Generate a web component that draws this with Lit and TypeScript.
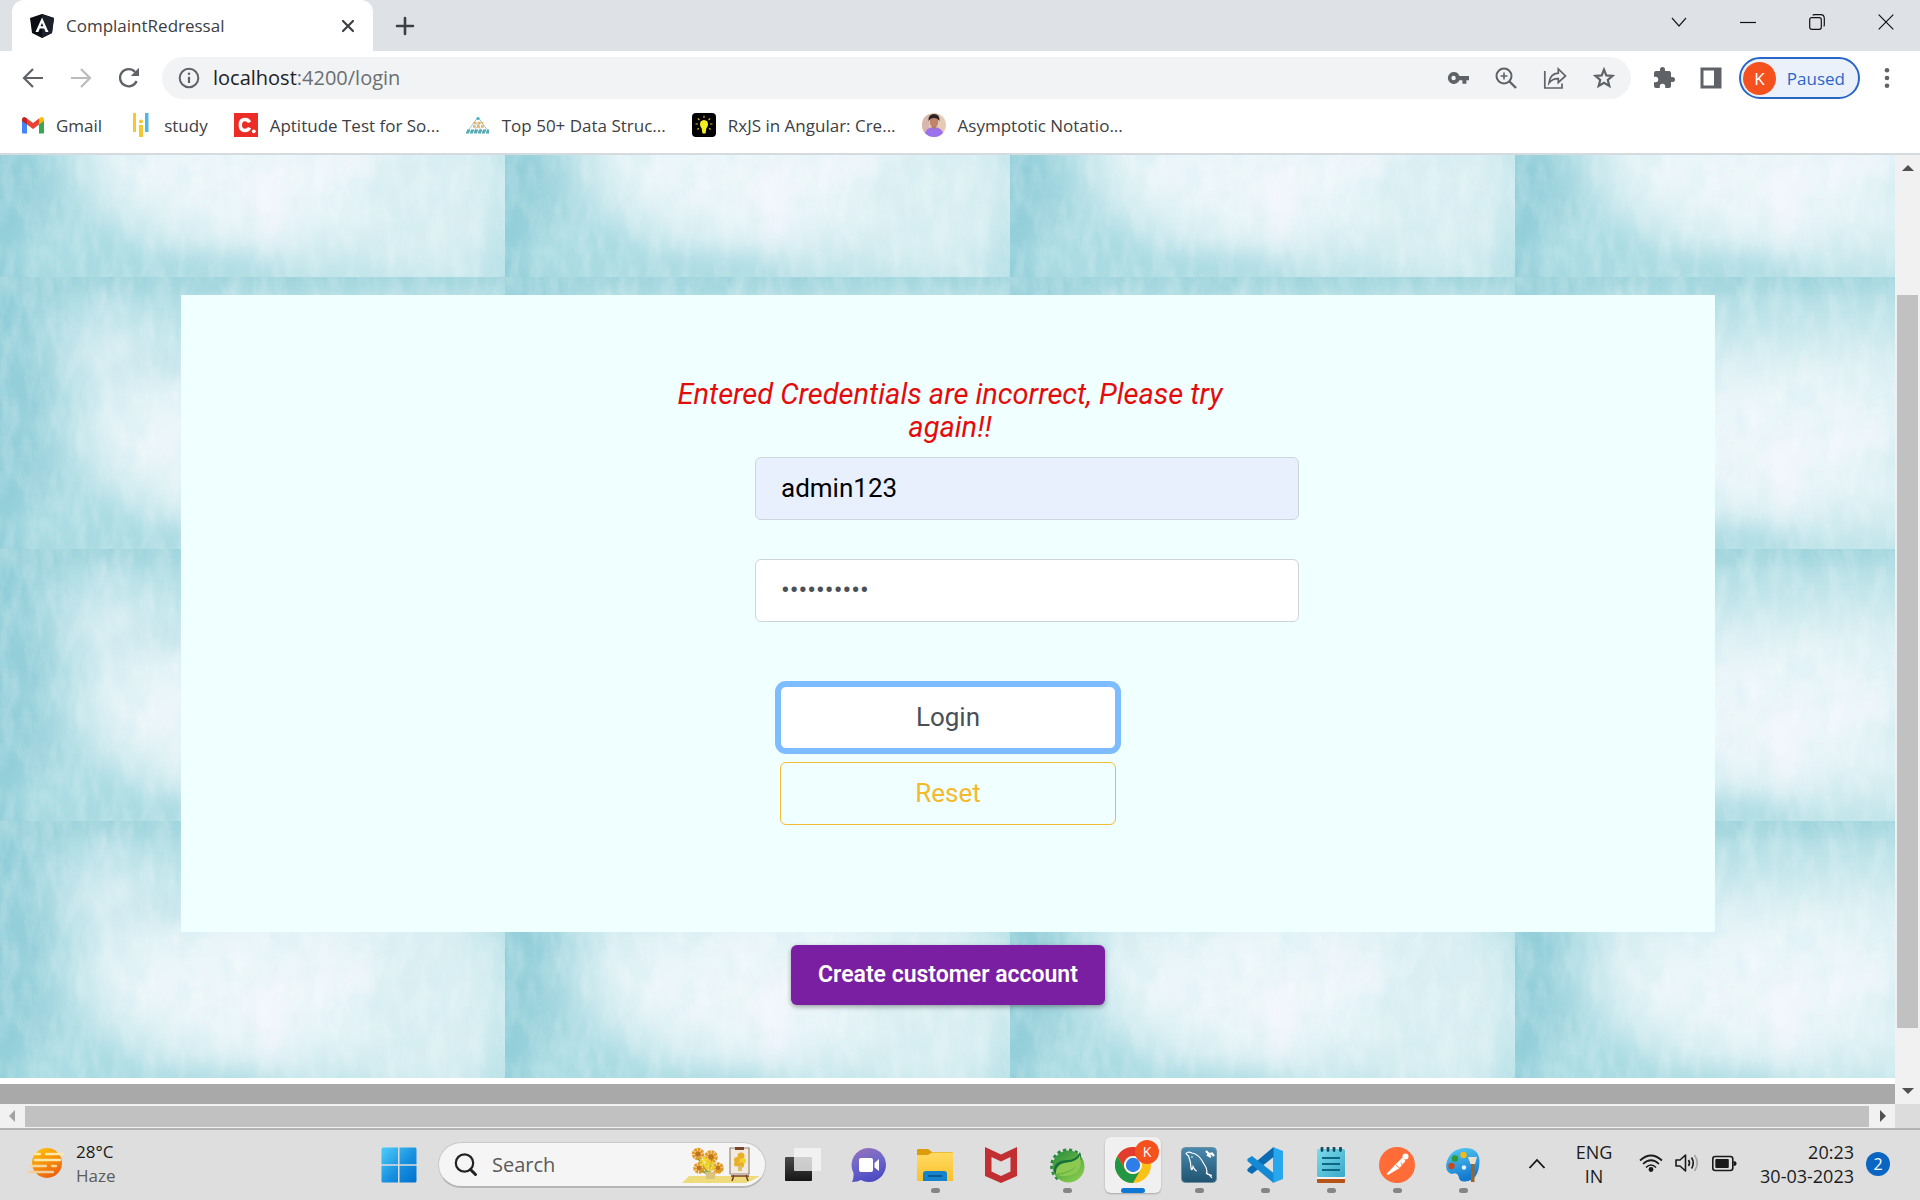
import { LitElement, html, css } from "lit";
import { customElement } from "lit/decorators.js";

const icons = {
  angular: html`<svg width="24" height="24" viewBox="0 0 24 24" aria-hidden="true">
    <path d="M12 0 24 4 22 19 12 24 2 19 0 4Z" fill="#0b0d14"/><path d="M12 0 24 4 22 19 12 24Z" fill="#1c202b"/>
    <path d="M12 3.5 5.5 18H8.4L9.8 14.6H14.2L15.6 18H18.5ZM12 9 13.4 12.3H10.6Z" fill="#fff"/></svg>`,
  close: html`<svg width="14" height="14" viewBox="0 0 14 14" aria-hidden="true"><path d="M2 2 12 12M12 2 2 12" stroke="#3c4043" stroke-width="2.2" stroke-linecap="round"/></svg>`,
  plus: html`<svg width="20" height="20" viewBox="0 0 20 20" aria-hidden="true"><path d="M10 2V18M2 10H18" stroke="#3c4043" stroke-width="2.6" stroke-linecap="round"/></svg>`,
  tabSearch: html`<svg width="16" height="16" viewBox="0 0 16 16" fill="none" aria-hidden="true"><path d="M1 4 8 12 15 4" stroke="#222" stroke-width="1.2"/></svg>`,
  minimize: html`<svg width="16" height="16" viewBox="0 0 16 16" aria-hidden="true"><path d="M0 8.5H16" stroke="#111" stroke-width="1.2"/></svg>`,
  restore: html`<svg width="16" height="16" viewBox="0 0 16 16" fill="none" stroke="#111" stroke-width="1.2" aria-hidden="true"><rect x=".7" y="3.7" width="11.6" height="11.6" rx="2"/><path d="M3.7 1.2Q4.3.7 5.5.7H11.5Q15.3.7 15.3 4.5V10.5Q15.3 11.7 14.8 12.5"/></svg>`,
  winClose: html`<svg width="16" height="16" viewBox="0 0 16 16" aria-hidden="true"><path d="M.7.7 15.3 15.3M15.3.7.7 15.3" stroke="#111" stroke-width="1.2"/></svg>`,
  back: html`<svg width="22" height="22" viewBox="0 0 22 22" fill="none" stroke="#5f6368" stroke-width="2.2" aria-hidden="true"><path d="M21 11H2.5M11 2 2 11 11 20"/></svg>`,
  forward: html`<svg width="22" height="22" viewBox="0 0 22 22" fill="none" stroke="#babcbe" stroke-width="2.2" aria-hidden="true"><path d="M1 11H19.5M11 2 20 11 11 20"/></svg>`,
  reload: html`<svg width="22" height="22" viewBox="0 0 22 22" aria-hidden="true"><path d="M18.6 14A8.6 8.6 0 1 1 17 4.9" fill="none" stroke="#5f6368" stroke-width="2.3"/><path d="M21 .8V9H12.8Z" fill="#5f6368"/></svg>`,
  info: html`<svg width="22" height="22" viewBox="0 0 22 22" aria-hidden="true"><circle cx="11" cy="11" r="9.3" fill="none" stroke="#5f6368" stroke-width="2"/><path d="M11 9.8V16" stroke="#5f6368" stroke-width="2.2"/><circle cx="11" cy="6.7" r="1.3" fill="#5f6368"/></svg>`,
  key: html`<svg width="22" height="22" viewBox="0 0 22 22" aria-hidden="true"><path d="M7 5A6 6 0 1 0 12.4 13.2H15.4V16.8H19.4V13.2H22V9H12.4A6 6 0 0 0 7 5ZM6.6 8.8A2.2 2.2 0 1 1 6.6 13.2 2.2 2.2 0 0 1 6.6 8.8Z" fill="#5f6368" fill-rule="evenodd"/></svg>`,
  zoom: html`<svg width="22" height="22" viewBox="0 0 22 22" fill="none" stroke="#5f6368" aria-hidden="true"><circle cx="9" cy="9" r="7.5" stroke-width="2"/><path d="M14.500 14.500 21 21" stroke-width="2.4"/><path d="M9 5.6V12.4M5.6 9H12.4" stroke-width="1.6"/></svg>`,
  share: html`<svg width="24" height="24" viewBox="0 0 24 24" fill="none" stroke="#5f6368" stroke-width="1.7" stroke-linejoin="miter" aria-hidden="true"><path d="M1.8 5V22H19V17.5"/><path d="M6 17Q7 7.7 15.3 7.2V3L22.5 10 15.3 16.5V12.6Q9.5 12.3 6 17Z"/></svg>`,
  star: html`<svg width="22" height="22" viewBox="0 0 22 22" fill="none" stroke="#5f6368" stroke-width="2.2" aria-hidden="true"><path d="M11 2.6 13.3 8.400 19.500 8.900 14.800 12.900 16.300 19 11 15.700 5.700 19 7.200 12.900 2.500 8.900 8.700 8.400Z"/></svg>`,
  puzzle: html`<svg width="24" height="24" viewBox="0 0 24 24" aria-hidden="true"><path d="M20.500 11H19V7a2 2 0 0 0-2-2h-4V3.500a2.500 2.500 0 0 0-5 0V5H4a2 2 0 0 0-2 2v3.800h1.500a2.700 2.700 0 0 1 0 5.400H2V20a2 2 0 0 0 2 2h3.800v-1.500a2.700 2.700 0 0 1 5.400 0V22H17a2 2 0 0 0 2-2v-4h1.500a2.500 2.500 0 0 0 0-5Z" fill="#5f6368"/></svg>`,
  panel: html`<svg width="22" height="22" viewBox="0 0 22 22" aria-hidden="true"><path d="M.5.500H21.500V21.500H.5Z" fill="#5f6368"/><path d="M3.500 3.500H14V18.500H3.500Z" fill="#fff"/></svg>`,
  dots: html`<svg width="6" height="22" viewBox="0 0 6 22" fill="#5f6368" aria-hidden="true"><circle cx="3" cy="3.200" r="2.300"/><circle cx="3" cy="11" r="2.300"/><circle cx="3" cy="18.800" r="2.300"/></svg>`,
  gmail: html`<svg width="24" height="24" viewBox="0 0 24 24" aria-hidden="true"><path d="M2 7V19.500Q2 20.500 3 20.500H7V10Z" fill="#4285f4"/><path d="M24 7V19.500Q24 20.500 23 20.500H19V10Z" fill="#34a853"/><path d="M7 5.500 13 10 19 5.500V11.500L13 16 7 11.500Z" fill="#ea4335"/><path d="M2 7Q2 4 4.500 4 5.500 4 7 5.500V11.500L2 8Z" fill="#c5221f"/><path d="M24 7Q24 4 21.500 4 20.500 4 19 5.500V11.500L24 8Z" fill="#fbbc04"/></svg>`,
  study: html`<svg width="24" height="24" viewBox="-4 0 24 24" aria-hidden="true"><path d="M1 0H4V19H1ZM7 12H11V24H7Z" fill="#f8c630"/><circle cx="9" cy="8.500" r="2" fill="#f8c630"/><path d="M13 0H16.500V19H13Z" fill="#55b4e8"/></svg>`,
  coding: html`<svg width="24" height="24" viewBox="0 0 24 24" aria-hidden="true"><path d="M0 0H24V24H0Z" fill="#ec2d27"/><path d="M15.500 9.300Q14.400 6.500 10.900 6.500 6.300 6.500 6.300 12T10.900 17.500Q14.400 17.500 15.500 14.700" fill="none" stroke="#fff" stroke-width="3.400"/><circle cx="19.800" cy="18.300" r="1.900" fill="#fff"/></svg>`,
  pyramid: html`<svg width="24" height="24" viewBox="0 0 24 24" fill="none" aria-hidden="true"><path d="M12 4 2 18H22ZM9 9 16 18M15 9 8 18" stroke="#9cc7cd" stroke-width="1"/><path d="M7.500 10H17M7 13.500H18" stroke="#e9b266" stroke-width="2.600" stroke-dasharray="2.800 1.200"/><path d="M1 17.500H23M0 19.500H24" stroke="#55a9b4" stroke-width="2" stroke-dasharray="3 1"/><circle cx="12" cy="5.500" r="1.600" fill="#4fb3bf"/></svg>`,
  bulb: html`<svg width="24" height="24" viewBox="0 0 24 24" aria-hidden="true"><rect width="24" height="24" rx="4"/><path d="M12 7A4.300 4.300 0 0 0 8 11.500Q8 13.400 9.700 15.500L10.300 20Q12 21.500 13.700 20L14.300 15.500Q16 13.400 16 11.500A4.300 4.300 0 0 0 12 7Z" fill="#f3ee20"/><path d="M12 2.800V5M5.800 5.500 7.500 7M18.200 5.500 16.500 7M3.500 11H6M18 11H20.500M5.300 16.500 7 15.300M18.700 16.500 17 15.300" stroke="#e0b52a" stroke-width="1.100"/></svg>`,
  avatar: html`<svg width="24" height="24" viewBox="0 0 24 24" aria-hidden="true"><defs><clipPath id="av"><circle cx="12" cy="12" r="12"/></clipPath></defs><g clip-path="url(#av)"><path d="M0 0H24V24H0Z" fill="#e5cbb6"/><path d="M0 0H7V24H0Z" fill="#d7b7ae"/><path d="M2 24Q3 14 12 14T22 24Z" fill="#9c72ec"/><ellipse cx="12" cy="9" rx="4.200" ry="5.500" fill="#c1846b"/><path d="M6.500 8Q6 1 12 1T17.500 8Q15 4.500 12 5 9 4.500 6.500 8Z" fill="#2b2324"/><path d="M9.500 13.500 12 17 14.500 13.500Z" fill="#b67663"/></g></svg>`,
  haze: html`<svg width="38" height="34" viewBox="0 0 38 34" aria-hidden="true"><defs><linearGradient id="hz" x1="0" y1="0" x2=".5" y2="1"><stop stop-color="#ffc908"/><stop offset="1" stop-color="#ec6410"/></linearGradient></defs><circle cx="19" cy="16" r="15" fill="url(#hz)"/><g fill="none" stroke="#ffe9a8" stroke-width="2.300" stroke-linecap="round"><path d="M7 7H12M18 7H35" /><path d="M7 13H32"/><path d="M2 19H18M24 19H28" stroke="#f6d69a"/><path d="M1 25H25" stroke="#efcf9a"/></g></svg>`,
  start: html`<svg width="36" height="36" viewBox="0 0 36 36" aria-hidden="true"><defs><linearGradient id="wn" x1="0" y1="0" x2="1" y2="1"><stop stop-color="#4fcdfa"/><stop offset=".55" stop-color="#1790df"/><stop offset="1" stop-color="#0270cf"/></linearGradient></defs><path d="M2 .500H17V17.300H.5V2Q.5.500 2 .500ZM18.500.500H34Q35.500.500 35.500 2V17.300H18.500ZM.5 18.700H17V35.500H2Q.5 35.500.5 34ZM18.500 18.700H35.500V34Q35.500 35.500 34 35.500H18.500Z" fill="url(#wn)"/></svg>`,
  search: html`<svg width="24" height="24" viewBox="0 0 24 24" fill="none" stroke="#222" aria-hidden="true"><circle cx="10.500" cy="10" r="8.700" stroke-width="2.200"/><path d="M16.500 16.500 21.500 21.500" stroke-width="3" stroke-linecap="round"/></svg>`,
  sunflowers: html`<svg width="78" height="38" viewBox="0 0 78 38" aria-hidden="true"><path d="M0 37 7 30H78Q72 34 64 37Z" fill="#eedb7c"/>
    <path d="M16 12 26 27M30 12 27 28M40 24 28 28M18 24 26 28" stroke="#8e9c35" stroke-width="2"/>
    <g fill="none" stroke="#e59a26" stroke-width="4.500" stroke-dasharray="2.400 .6"><circle cx="16" cy="8" r="4"/><circle cx="29" cy="11" r="4.500"/><circle cx="17" cy="22" r="3.500"/><circle cx="36" cy="22" r="3.500"/><circle cx="23" cy="16" r="3" stroke="#f3d328"/><circle cx="28" cy="20" r="3" stroke="#efcf2b"/></g>
    <g fill="#bd741b"><circle cx="16" cy="8" r="2.600"/><circle cx="29" cy="11" r="2.800"/><circle cx="17" cy="22" r="2.300"/><circle cx="36" cy="22" r="2.300"/></g>
    <path d="M23 26H34L32.500 33H24.500Z" fill="#dcc27f"/>
    <path d="M52 29 50 35M64 29 66 35M49 30H67" stroke="#7b4325" stroke-width="1.600"/><path d="M48 2H67V28H48Z" fill="#f1ebdf" stroke="#9a8576" stroke-width="1.200"/><path d="M53 1H62V4H53ZM57 0V2" fill="#7b4325"/><g fill="#e9ae27"><circle cx="59" cy="10" r="3.500"/><circle cx="55" cy="14" r="3"/><circle cx="61" cy="15" r="3" fill="#f3d328"/><circle cx="54.500" cy="18" r="2.500"/><circle cx="59" cy="19" r="3"/></g><path d="M56 20H60V25H56Z" fill="#d8bf72"/></svg>`,
  taskView: html`<svg width="36" height="36" viewBox="0 0 36 36" aria-hidden="true"><defs><linearGradient id="tv" x1="0" y1="0" x2="0" y2="1"><stop stop-color="#4a4a4a"/><stop offset="1" stop-color="#161616"/></linearGradient></defs><rect y="10" width="27" height="24" rx="1" fill="url(#tv)"/><rect x="9" y="1" width="27" height="23" rx="1" fill="#f6f6f6" opacity=".78"/></svg>`,
  chat: html`<svg width="36" height="36" viewBox="0 0 36 36" aria-hidden="true"><defs><linearGradient id="ch" x1="0" y1="0" x2=".3" y2="1"><stop stop-color="#9a71b8"/><stop offset=".5" stop-color="#6f68c9"/><stop offset="1" stop-color="#4f4cc4"/></linearGradient></defs><path d="M17.500 1A17 17 0 1 1 10 33Q6.500 35 1 35 3 31 2.500 26A17 17 0 0 1 17.500 1Z" fill="url(#ch)"/><rect x="8" y="11" width="14" height="14" rx="2" fill="#fff"/><path d="M23.500 16 28 12V24L23.500 20.500Z" fill="#fff"/></svg>`,
  folder: html`<svg width="36" height="36" viewBox="0 0 36 36" aria-hidden="true"><defs><linearGradient id="fo" x1="0" y1="0" x2="0" y2="1"><stop stop-color="#ffdb62"/><stop offset="1" stop-color="#fbc02d"/></linearGradient></defs><path d="M0 3Q0 2 1 2H11Q12 2 13 3.500L15 5H35Q36 5 36 6V12H0Z" fill="#dc9d0c"/><path d="M0 8H11L15 5.500H36V34H0Z" fill="url(#fo)"/><path d="M6 34V27Q6 24 9 24H27Q30 24 30 27V34Z" fill="#1583cb"/><path d="M11 29H25" stroke="#0a4a83" stroke-width="1.500"/></svg>`,
  mcafee: html`<svg width="36" height="36" viewBox="0 0 36 36" aria-hidden="true"><path d="M2 0 18 7.500 34 0V29L18 36 2 29ZM8.500 10V24.500L18 29 27.500 24.500V10L18 14.500Z" fill="#c12f33" fill-rule="evenodd"/></svg>`,
  spring: html`<svg width="36" height="36" viewBox="0 0 36 36" aria-hidden="true"><defs><linearGradient id="sp" x1="0" y1="0" x2=".7" y2="1"><stop stop-color="#278b3c"/><stop offset="1" stop-color="#86cb4b"/></linearGradient></defs><path d="M28 6.500A15.500 15.500 0 1 0 10 32" fill="none" stroke="#278b3c" stroke-width="4.500" stroke-dasharray="3 2.600"/><circle cx="19.500" cy="19.500" r="16" fill="url(#sp)"/><path d="M31 5Q34 12 30 17 25 21 15 22 8 23 6 27 3 20 8 16 12 13 19 13 27 13 31 5Z" fill="#17703a"/><path d="M31 8Q34 20 27 26 19 31 8 28 21 27 27.500 19 20 25.500 7 27 6 17 18 15.500 28 15 31 8Z" fill="#8bc951"/></svg>`,
  chrome: html`<svg width="36" height="36" viewBox="0 0 36 36" aria-hidden="true"><circle cx="18" cy="18" r="18" fill="#fbc116"/><path d="M2.400 9A18 18 0 0 1 33.600 9H18A9 9 0 0 0 10.200 22.500Z" fill="#e33b2e"/><path d="M2.400 9 10.200 22.500A9 9 0 0 0 25.800 22.500L18 36A18 18 0 0 1 2.400 9Z" fill="#239646"/><circle cx="18" cy="18" r="9" fill="#fff"/><circle cx="18" cy="18" r="7.200" fill="#2f7de9"/></svg>`,
  mysql: html`<svg width="36" height="36" viewBox="0 0 36 36" aria-hidden="true"><defs><linearGradient id="my" x1="0" y1="0" x2="0" y2="1"><stop stop-color="#4a89ad"/><stop offset="1" stop-color="#205372"/></linearGradient></defs><rect x=".5" y=".5" width="35" height="35" rx="4" fill="url(#my)" stroke="#6d8fa2"/><g fill="none" stroke="#fff" stroke-width="1.200"><path d="M31 31Q28 27 25.500 26.500 27 23 23 17 18 7 11 6 7 4 5 6.500 6 8 7.500 9 10 15 10 21 11 25 12 19.500 14 24 16 24"/><path d="M25.500 26.500 31 28.500"/></g><circle cx="11" cy="10" r=".8" fill="#fff"/><path d="M25 4 28 7 31 6.500 33 9M26 7.500 30 10" stroke="#fff" stroke-width="2.200" fill="none"/></svg>`,
  vscode: html`<svg width="36" height="36" viewBox="0 0 36 36" aria-hidden="true"><path d="M26 0 36 4V32L26 36Z" fill="#27a7ee"/><path d="M26.500 0V10L5 27 1 24.500Q-.5 23 1 21.500Z" fill="#0b6bb2"/><path d="M1 14.500Q-.5 13 1 11.500L5 9 26.500 26V36Z" fill="#1489d4"/></svg>`,
  notepad: html`<svg width="36" height="36" viewBox="0 0 36 36" aria-hidden="true"><defs><linearGradient id="np" x1="0" y1="0" x2="1" y2="1"><stop stop-color="#7cdcec"/><stop offset="1" stop-color="#39a8c7"/></linearGradient></defs><path d="M4 30H32V32H4Z" fill="#f3f3f3"/><path d="M4 32H32V35Q32 36 31 36H5Q4 36 4 35Z" fill="#b75417"/><rect x="4" y="2" width="28" height="28" rx="1.500" fill="url(#np)"/><path d="M9 11H27M9 17H27M9 23H27" stroke="#0d6683" stroke-width="2"/><path d="M9 1V3.500M15 1V3.500M21 1V3.500M27.500 1V3.500" stroke="#184c63" stroke-width="2.800" stroke-linecap="round"/></svg>`,
  postman: html`<svg width="36" height="36" viewBox="0 0 36 36" aria-hidden="true"><circle cx="18" cy="18" r="18" fill="#ff6c37"/><circle cx="26.500" cy="9.500" r="3" fill="#fff"/><path d="M23.500 10.500 26.500 14 20 21.500 9 28 7.500 27 16 18Z" fill="#fff"/><path d="M17 18 21 21.500M22 15.500 23.500 19" stroke="#ff6c37" stroke-width=".9"/></svg>`,
  paint: html`<svg width="36" height="36" viewBox="0 0 36 36" aria-hidden="true"><defs><linearGradient id="pa" x1="0" y1="0" x2=".3" y2="1"><stop stop-color="#55cdf5"/><stop offset="1" stop-color="#1478cf"/></linearGradient></defs><path d="M20 1Q34 1 34.500 14 34 34 20 34.500 14 35 13.500 29 12 25 7 27 1 26 1 18 4 2 20 1Z" fill="url(#pa)"/><circle cx="10" cy="11.500" r="3.200" fill="#329a2c"/><circle cx="18.500" cy="8" r="3.200" fill="#f4b912"/><circle cx="6.500" cy="19" r="3.200" fill="#c9481d"/><circle cx="19" cy="20.500" r="2.200" fill="#e2f4fb"/><path d="M26 17H29.500V35H26Z" fill="#9a642a"/><path d="M23 10H32L30 17H25.500Z" fill="#eee0c8"/></svg>`,
  chevronUp: html`<svg width="18" height="18" viewBox="0 0 18 18" fill="none" aria-hidden="true"><path d="M1.500 13 9 5 16.500 13" stroke="#111" stroke-width="1.800"/></svg>`,
  wifi: html`<svg width="24" height="24" viewBox="0 0 24 24" fill="none" stroke="#1a1a1a" stroke-width="1.700" aria-hidden="true"><path d="M1 8.500Q12-1.500 23 8.500M4 12Q12 4.500 20 12M7 15.500Q12 10.500 17 15.500"/><circle cx="12" cy="17.500" r="1.600" fill="#1a1a1a"/></svg>`,
  speaker: html`<svg width="24" height="24" viewBox="0 0 24 24" fill="none" stroke="#1a1a1a" stroke-width="1.600" stroke-linejoin="round" aria-hidden="true"><path d="M1 8H5L10.500 3V19L5 14H1Z"/><path d="M13.500 8Q15.500 11 13.500 14M16.500 5.500Q20 11 16.500 16.500"/><path d="M19.500 3Q25 11 19.500 19" stroke="#a4a4a4"/></svg>`,
  battery: html`<svg width="26" height="18" viewBox="0 0 26 18" aria-hidden="true"><rect x="1.800" y="1.500" width="20" height="14" rx="2.500" fill="none" stroke="#1a1a1a" stroke-width="1.600"/><rect x="4.300" y="4" width="13.500" height="9" rx="1" fill="#1a1a1a"/><path d="M22.500 6Q25.500 6 25.500 8.500T22.500 11Z" fill="#1a1a1a"/></svg>`,
};

const bookmarks = [
  { icon: icons.gmail, label: "Gmail" },
  { icon: icons.study, label: "study" },
  { icon: icons.coding, label: "Aptitude Test for So..." },
  { icon: icons.pyramid, label: "Top 50+ Data Struc..." },
  { icon: icons.bulb, label: "RxJS in Angular: Cre..." },
  { icon: icons.avatar, label: "Asymptotic Notatio..." },
];

const apps = [
  { name: "Task view", icon: icons.taskView, state: "" },
  { name: "Chat", icon: icons.chat, state: "" },
  { name: "File Explorer", icon: icons.folder, state: "open" },
  { name: "McAfee", icon: icons.mcafee, state: "" },
  { name: "Spring Tools", icon: icons.spring, state: "open" },
  { name: "Google Chrome", icon: icons.chrome, state: "active" },
  { name: "MySQL Workbench", icon: icons.mysql, state: "open" },
  { name: "Visual Studio Code", icon: icons.vscode, state: "open" },
  { name: "Notepad", icon: icons.notepad, state: "open" },
  { name: "Postman", icon: icons.postman, state: "open" },
  { name: "Paint", icon: icons.paint, state: "open" },
];

const reset = css`
  * { box-sizing: border-box; }
  svg { display: block; flex: none; }
  button { font: inherit; color: inherit; background: none; border: 0; margin: 0; padding: 0; }
  a { color: inherit; text-decoration: none; }
`;

@customElement("browser-chrome")
export class BrowserChrome extends LitElement {
  static styles = [reset, css`
    :host { display: block; background: #fff; color: #3c4043; font-family: "Open Sans", "Noto Sans", sans-serif; font-size: 17px; }
    .tabs { display: flex; align-items: center; height: 51px; padding-left: 12px; background: #dee1e6; }
    .tab { display: flex; align-items: center; gap: 12px; width: 361px; height: 51px; padding: 0 18px; background: #fff; border-radius: 12px 12px 0 0; }
    .title { flex: 1; }
    .new { margin-left: 22px; }
    .window { display: flex; gap: 53px; margin: 0 26px 8px auto; }
    .toolbar { display: flex; align-items: center; height: 54px; padding: 0 30px 0 22px; }
    .nav { display: flex; gap: 26px; margin-right: 22px; }
    .omnibox { display: flex; flex: 1; align-items: center; gap: 26px; height: 42px; padding: 0 16px; border-radius: 21px; background: #f1f3f4; }
    .address { flex: 1; min-width: 0; margin-left: -13px; padding: 0; border: 0; background: none; font-size: 20px; line-height: 28px; color: #6b6f73; }
    .host { color: #202124; }
    .actions { display: flex; align-items: center; gap: 24px; margin-left: 21px; }
    .profile { display: flex; align-items: center; justify-content: space-between; width: 121px; height: 42px; margin-left: -7px; padding: 0 13px 0 2px; border: 2px solid #2a66c8; border-radius: 21px; background: #eaf1fb; color: #2a66c8; }
    .initial { display: grid; place-items: center; width: 33px; height: 33px; border-radius: 50%; background: #f4511e; color: #fff; }
    .bookmarks { display: flex; align-items: center; gap: 26px; height: 48px; padding: 0 20px 8px; }
    .bookmark { display: flex; align-items: center; gap: 12px; }
    .rule { height: 2px; background: #d5dade; }
  `];
  render() {
    return html`
      <div class="tabs">
        <div class="tab">${icons.angular}<span class="title">ComplaintRedressal</span><button aria-label="Close tab">${icons.close}</button></div>
        <button class="new" aria-label="New tab">${icons.plus}</button>
        <div class="window">
          <button aria-label="Search tabs">${icons.tabSearch}</button><button aria-label="Minimize">${icons.minimize}</button>
          <button aria-label="Restore">${icons.restore}</button><button aria-label="Close">${icons.winClose}</button>
        </div>
      </div>
      <div class="toolbar">
        <div class="nav"><button aria-label="Back">${icons.back}</button><button aria-label="Forward">${icons.forward}</button><button aria-label="Reload">${icons.reload}</button></div>
        <div class="omnibox">
          <button aria-label="Site information">${icons.info}</button>
          <div class="address" role="textbox" aria-label="Address" contenteditable="plaintext-only"><span class="host">localhost</span>:4200/login</div>
          <button aria-label="Passwords">${icons.key}</button><button aria-label="Zoom">${icons.zoom}</button>
          <button aria-label="Share">${icons.share}</button><button aria-label="Bookmark">${icons.star}</button>
        </div>
        <div class="actions">
          <button aria-label="Extensions">${icons.puzzle}</button><button aria-label="Side panel">${icons.panel}</button>
          <button class="profile"><span class="initial">K</span>Paused</button>
          <button aria-label="Menu">${icons.dots}</button>
        </div>
      </div>
      <nav class="bookmarks">${bookmarks.map((b) => html`<a class="bookmark" href="#">${b.icon}<span>${b.label}</span></a>`)}</nav>
      <div class="rule"></div>
    `;
  }
}

@customElement("login-page")
export class LoginPage extends LitElement {
  static styles = [reset, css`
    :host { position: relative; display: flex; flex-direction: column; min-width: 0; overflow: hidden; font-family: Roboto, sans-serif; background: #a9a9a9; }
    .page { position: relative; flex: 1; padding: 140px 180px 72px 181px; border-bottom: 6px solid #fff; text-align: center; }
    .texture { position: absolute; inset: 0; width: 100%; height: 100%; }
    .card { position: relative; display: flex; flex-direction: column; align-items: center; padding: 83px 0 107px; background: #f0ffff; }
    .error { width: 560px; margin: 0 0 13px 4px; font-size: 29px; font-style: italic; line-height: 33px; color: #e60b0b; }
    .field { width: 544px; height: 63px; margin: 0 0 39px 158px; padding: 0 25px 1px; border: 1px solid #ced4da; border-radius: 6px; background: #fff; font: 26px/40px Roboto, sans-serif; color: #495057; outline: 0; }
    .filled { background: #e8f0fe; color: #000; }
    .btn { width: 336px; height: 63px; padding-bottom: 2px; border: 1px solid #f2bb33; border-radius: 6px; font-size: 26px; color: #f5b92c; }
    .login { margin: 25px 0 13px; border-color: #7dbcff; background: #fff; color: #495057; box-shadow: 0 0 0 5px #7dbcff; }
    .create { position: relative; height: 60px; margin-top: 13px; padding: 0 27px 2px; border-radius: 6px; background: #7b1fa2; color: #fff; font-size: 23px; font-weight: 600; box-shadow: 0 2px 5px rgba(0, 0, 0, .35); }
    .footer { height: 20px; }
  `];
  render() {
    return html`
      <main class="page">
        <svg class="texture" aria-hidden="true">
          <defs>
            <linearGradient id="edge"><stop stop-color="#8fcdd8"/><stop offset=".08" stop-color="#9dd3dd"/><stop offset=".2" stop-color="#b0dee4"/><stop offset=".6" stop-color="#b8e1e6"/><stop offset=".9" stop-color="#c2e5ea"/><stop offset="1" stop-color="#b2dfe5"/></linearGradient>
            <filter id="soft" x="-50%" y="-50%" width="200%" height="200%"><feGaussianBlur stdDeviation="24"/></filter>
            <filter id="mist" x="-50%" y="-50%" width="200%" height="200%"><feGaussianBlur stdDeviation="11"/></filter>
            <filter id="light" x="0" y="0" width="100%" height="100%"><feTurbulence type="fractalNoise" baseFrequency=".07 .025" numOctaves="5" seed="7"/><feColorMatrix values="0 0 0 0 1  0 0 0 0 1  0 0 0 0 1  2 0 0 0 -.8"/></filter>
            <filter id="dark" x="0" y="0" width="100%" height="100%"><feTurbulence type="fractalNoise" baseFrequency=".035 .03" numOctaves="5" seed="19"/><feColorMatrix values="0 0 0 0 .54  0 0 0 0 .8  0 0 0 0 .84  2 0 0 0 -.85"/></filter>
            <pattern id="tile" width="505" height="272" y="122" patternUnits="userSpaceOnUse">
              <rect width="505" height="272" fill="url(#edge)"/>
              <g filter="url(#soft)">
                <ellipse cx="290" cy="155" rx="215" ry="98" fill="#dff1f5"/>
                <ellipse cx="260" cy="165" rx="145" ry="60" fill="#ecf6fa"/>
                <ellipse cx="430" cy="190" rx="75" ry="85" fill="#daeff3"/>
                <ellipse cx="110" cy="70" rx="55" ry="36" fill="#cbe8ee"/>
              </g>
              <g filter="url(#mist)">
                <ellipse cx="110" cy="75" rx="30" ry="20" fill="#d5ecf1"/>
                <ellipse cx="165" cy="90" rx="26" ry="7" fill="#b2dce3"/>
                <rect x="-20" y="-14" width="545" height="28" fill="#9bd2db"/>
                <ellipse cx="16" cy="130" rx="22" ry="60" fill="#93ced9"/>
                <ellipse cx="75" cy="250" rx="60" ry="25" fill="#abdce3"/>
                <ellipse cx="190" cy="266" rx="110" ry="10" fill="#a6d8e0"/>
                <ellipse cx="270" cy="195" rx="18" ry="42" fill="#f2f6fd"/>
                <ellipse cx="340" cy="155" rx="35" ry="18" fill="#eff6fb"/>
              </g>
              <rect width="505" height="272" filter="url(#light)" opacity=".28"/>
              <rect width="505" height="272" filter="url(#dark)" opacity=".28"/>
            </pattern>
          </defs>
          <rect width="100%" height="100%" fill="url(#tile)"/>
        </svg>
        <form class="card" @submit=${(e: Event) => e.preventDefault()}>
          <p class="error" role="alert">Entered Credentials are incorrect, Please try again!!</p>
          <input class="field filled" type="text" aria-label="Username" .value=${"admin123"}>
          <input class="field" type="password" aria-label="Password" .value=${"admin12345"}>
          <button class="btn login" type="submit">Login</button>
          <button class="btn" type="reset">Reset</button>
        </form>
        <button class="create">Create customer account</button>
      </main>
      <div class="footer"></div>
    `;
  }
}

@customElement("task-bar")
export class TaskBar extends LitElement {
  static styles = [reset, css`
    :host { display: flex; align-items: center; height: 72px; padding: 0 30px 0 28px; border-top: 2px solid #b2b2b2; background: #dedede; color: #1b1b1b; font-family: "Open Sans", "Noto Sans", sans-serif; font-size: 17px; line-height: 24px; }
    .weather { display: flex; align-items: center; gap: 10px; width: 338px; padding-bottom: 2px; text-align: left; }
    .muted { color: #5c5c5c; }
    .line { display: block; }
    .item { position: relative; display: grid; place-items: center; width: 66px; height: 56px; }
    .search { display: flex; align-items: center; gap: 14px; width: 328px; height: 46px; margin: 0 4px 0 6px; padding: 0 5px 0 15px; border: 1px solid #c9c9c9; border-bottom: 2px solid #b5b5b5; border-radius: 23px; background: #f5f5f5; }
    .query { flex: 1; min-width: 0; padding: 0; border: 0; background: none; outline: 0; font: 20px/26px "Open Sans", sans-serif; color: #5a5a5a; }
    .query::placeholder { color: #5a5a5a; opacity: 1; }
    .open::after, .active::after { content: ""; position: absolute; bottom: 0; width: 9px; height: 5px; border-radius: 3px; background: #858585; }
    .active::before { content: ""; position: absolute; inset: 0 5px; border-radius: 6px; background: #f0f0f0; box-shadow: 0 1px 2px rgba(0, 0, 0, .25); }
    .active svg { position: relative; }
    .active::after { width: 24px; background: #0e78d4; }
    .badge { position: absolute; top: 3px; right: 7px; display: grid; place-items: center; width: 24px; height: 24px; border-radius: 50%; background: #f4511e; color: #fff; font-size: 14px; }
    .tray { display: flex; align-items: center; margin-left: auto; padding-bottom: 2px; }
    .language, .clock { font-size: 18px; }
    .language { width: 40px; margin: 0 25px 0 28px; text-align: center; }
    .status { display: flex; align-items: center; gap: 12px; }
    .clock { width: 105px; margin: 0 12px; text-align: right; white-space: nowrap; }
    .count { display: grid; place-items: center; width: 24px; height: 24px; border-radius: 50%; background: #0a66c2; color: #fff; font-size: 16px; }
  `];
  render() {
    return html`
      <button class="weather">${icons.haze}<span><span class="line">28°C</span><span class="line muted">Haze</span></span></button>
      <button class="item" aria-label="Start">${icons.start}</button>
      <label class="search">${icons.search}<input class="query" type="search" placeholder="Search" aria-label="Search">${icons.sunflowers}</label>
      ${apps.map((a) => html`<button class="item ${a.state}" aria-label=${a.name}>${a.icon}${a.state === "active" ? html`<span class="badge">K</span>` : ""}</button>`)}
      <div class="tray">
        <button aria-label="Show hidden icons">${icons.chevronUp}</button>
        <button class="language"><span class="line">ENG</span><span class="line">IN</span></button>
        <button class="status" aria-label="Network, volume and battery">${icons.wifi}${icons.speaker}${icons.battery}</button>
        <button class="clock"><span class="line">20:23</span><span class="line">30-03-2023</span></button>
        <span class="count">2</span>
      </div>
    `;
  }
}

@customElement("app-root")
export class AppRoot extends LitElement {
  static styles = [reset, css`
    :host { display: flex; flex-direction: column; min-height: 100vh; }
    .view { display: grid; flex: 1; grid-template-columns: minmax(0, 1fr) 25px; grid-template-rows: 1fr 24px; background: #f1f1f1; }
    .vertical { display: flex; flex-direction: column; align-items: center; padding: 7px 0; }
    .vthumb { flex: 1; width: 21px; margin: 121px 0 57px; background: #c1c1c1; }
    .horizontal { display: flex; align-items: center; padding: 0 9px; }
    .hthumb { flex: 1; height: 21px; margin: 0 11px 0 10px; background: #c1c1c1; }
    .corner { background: #dcdcdc; }
  `];
  render() {
    return html`
      <browser-chrome></browser-chrome>
      <div class="view">
        <login-page></login-page>
        <div class="vertical"><svg width="12" height="12" viewBox="0 0 12 12"><path d="M0 9 6 3 12 9Z" fill="#505050"/></svg><div class="vthumb"></div><svg width="12" height="12" viewBox="0 0 12 12"><path d="M0 3 6 9 12 3Z" fill="#505050"/></svg></div>
        <div class="horizontal"><svg width="6" height="12" viewBox="0 0 6 12"><path d="M6 0 0 6 6 12Z" fill="#a3a3a3"/></svg><div class="hthumb"></div><svg width="6" height="12" viewBox="0 0 6 12"><path d="M0 0 6 6 0 12Z" fill="#505050"/></svg></div>
        <div class="corner"></div>
      </div>
      <task-bar></task-bar>
    `;
  }
}
